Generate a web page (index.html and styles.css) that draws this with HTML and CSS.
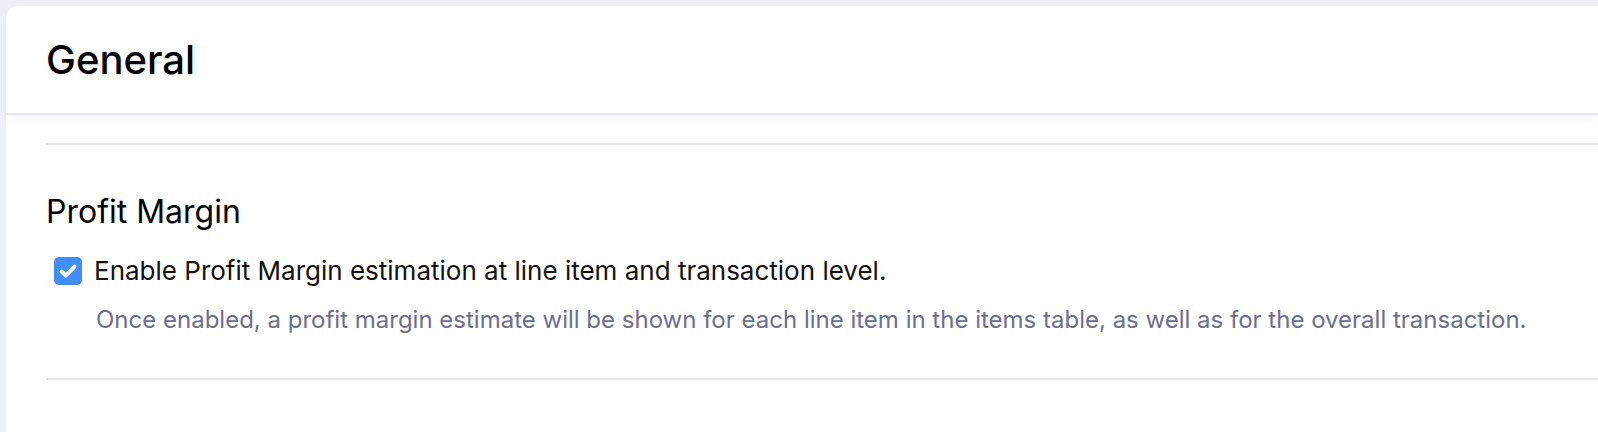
FILE: index.html
```html
<!DOCTYPE html>
<html>
<head>
<meta charset="utf-8">
<link rel="stylesheet" href="styles.css">
</head>
<body>
<div class="card">
  <header class="card-header">
    <h1 class="title">General</h1>
  </header>
  <main class="card-body">
    <hr class="divider">
    <section class="section">
      <h2 class="section-title">Profit Margin</h2>
      <label class="check-row">
        <span class="checkbox">
          <svg class="tick" viewBox="0 0 16 16"><path d="M3.3 8.4 6.4 11.3 12.7 4.9" fill="none" stroke="#fff" stroke-width="2.9" stroke-linecap="round" stroke-linejoin="round"/></svg>
        </span>
        <span class="check-label">Enable Profit Margin estimation at line item and transaction level.</span>
      </label>
      <p class="help">Once enabled, a profit margin estimate will be shown for each line item in the items table, as well as for the overall transaction.</p>
    </section>
    <hr class="divider">
  </main>
</div>
</body>
</html>
```
FILE: styles.css
```css
html, body {
  margin: 0;
  padding: 0;
  height: 100%;
}
body {
  background: #efeff8;
  font-family: Inter, "Noto Sans", sans-serif;
  padding: 6px 0 0 6px;
  box-sizing: border-box;
  overflow: hidden;
}
.card {
  background: #fff;
  border-top-left-radius: 12px;
  height: 100%;
}
.card-header {
  height: 107px;
  display: flex;
  align-items: center;
  padding-left: 40px;
  border-bottom: 2px solid #e6e6f2;
  box-shadow: 0 5px 8px rgba(0, 0, 0, 0.04);
  position: relative;
}
.title {
  margin: 0;
  font-size: 40px;
  font-weight: 500;
  color: #000;
}
.card-body {
  padding: 28px 0 0 40px;
}
.divider {
  margin: 0;
  border: 0;
  border-top: 2px solid #e4e4e8;
}
.section {
  padding: 47px 0 42px 0;
}
.section-title {
  margin: 0 0 21px 0;
  font-size: 32px;
  line-height: 40px;
  font-weight: 400;
  color: #000;
}
.check-row {
  display: flex;
  align-items: center;
  gap: 12px;
  padding-left: 8px;
  height: 36px;
}
.checkbox {
  width: 28px;
  height: 28px;
  border-radius: 5px;
  background: #408dfb;
  display: flex;
  align-items: center;
  justify-content: center;
  flex: none;
}
.tick {
  width: 22px;
  height: 22px;
  display: block;
}
.check-label {
  font-size: 26px;
  line-height: 36px;
  color: #111;
}
.help {
  margin: 15px 0 0 50px;
  font-size: 24px;
  line-height: 32px;
  color: #6b6f8e;
}
```
